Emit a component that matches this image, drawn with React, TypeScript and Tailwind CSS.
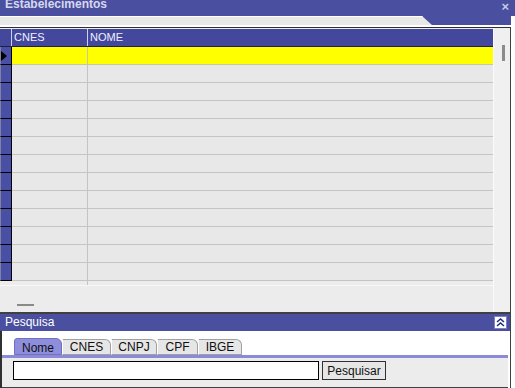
import React from 'react'

const ROWS = Array.from({ length: 13 }, (_, i) => i)
const TABS = [
  { label: 'Nome', w: 'w-[48px]' },
  { label: 'CNES', w: 'w-[49px]' },
  { label: 'CNPJ', w: 'w-[46px]' },
  { label: 'CPF', w: 'w-[41px]' },
  { label: 'IBGE', w: 'w-[44px]' },
]

function Row({ index }: { index: number }) {
  const active = index === 0
  return (
    <div className="flex h-[18px]">
      {/* row indicator */}
      <div className="w-[12px] border-l border-[#8080a0] border-r border-b border-r-black border-b-black bg-[#4a4fa6] flex items-center">
        {active && (
          <svg width="6" height="10" viewBox="0 0 6 10">
            <path d="M0 0 L6 5 L0 10 Z" fill="#000" />
          </svg>
        )}
      </div>
      <div
        className={
          active
            ? 'w-[76px] bg-[#ffff00] border-r border-b border-[#c8c8a0]'
            : 'w-[76px] bg-[#e8e8e8] border-r border-b border-[#c4c4c4]'
        }
      />
      <div
        className={
          active
            ? 'flex-1 bg-[#ffff00] border-b border-[#c8c8a0]'
            : 'flex-1 bg-[#e8e8e8] border-b border-[#c4c4c4]'
        }
      />
    </div>
  )
}

export default function App() {
  return (
    <div className="w-[515px] h-[388px] bg-white overflow-hidden flex flex-col font-['Liberation_Sans',Arial,sans-serif] text-[11px]">
      {/* Title bar */}
      <div className="h-[16px] bg-[#4a4f9f] flex items-start justify-between pl-[5px] pr-[6px] overflow-hidden">
        <span className="-mt-[4px] text-[12px] font-bold text-[#d6d8ee] leading-[16px]">Estabelecimentos</span>
        <span className="mt-[1px] text-[13px] font-bold text-[#c8cbe6] leading-[12px]">×</span>
      </div>

      {/* tab strip */}
      <div className="w-[511px] h-[12px] bg-[#4a4f9f] flex flex-col">
        <div className="h-[9px] w-[432px] bg-[#e8e8e8] border-t border-white [clip-path:polygon(0_0,422px_0,432px_100%,0_100%)]" />
        <div className="h-[2px] bg-white" />
        <div className="h-[1px] bg-[#303030]" />
      </div>

      {/* Grid + scrollbar */}
      <div className="w-[511px] h-[284px] flex border-r border-[#404040]">
        <div className="w-[493px] flex flex-col bg-[#ececec]">
          {/* header */}
          <div className="flex h-[18px] bg-[#43489c] border-b border-[#202040] text-[#f0f0ff] mt-[1px]">
            <div className="w-[12px] border-r border-[#d0d0e8]" />
            <div className="w-[76px] border-r border-[#d0d0e8] pl-[2px] leading-[17px]">CNES</div>
            <div className="flex-1 pl-[2px] leading-[17px]">NOME</div>
          </div>
          {ROWS.map((i) => (
            <Row key={i} index={i} />
          ))}
          <div className="flex h-[4px]">
            <div className="w-[88px] border-r border-[#c4c4c4]" />
          </div>
          <div className="flex-1 border-t border-[#f8f8f8] pl-[17px] pt-[18px]">
            <div className="w-[17px] h-[2px] bg-[#8a8a8a]" />
          </div>
        </div>
        <div className="flex-1 bg-[#f0f0f0] border-l border-[#fafafa] pt-[17px] pl-[8px]">
          <div className="w-[3px] h-[16px] bg-[#8c8c8c]" />
        </div>
      </div>

      {/* Pesquisa panel */}
      <div className="w-[511px] flex-1 flex flex-col border-t-2 border-[#101010] border-r border-[#404040]">
        <div className="h-[17px] bg-[#4a4f9f] flex items-center justify-between pl-[5px] pr-[3px]">
          <span className="text-[12px] text-white leading-[17px]">Pesquisa</span>
          <div className="w-[13px] h-[13px] bg-white border border-[#8080c0] flex items-center justify-center">
            <svg width="9" height="9" viewBox="0 0 9 9">
              <path d="M1 4 L4.5 1 L8 4 M1 8 L4.5 5 L8 8" stroke="#1c2a7c" strokeWidth="1.5" fill="none" />
            </svg>
          </div>
        </div>
        <div className="flex-1 flex flex-col border-l-2 border-[#303030] pt-[7px]">
          <div className="flex pl-[12px] h-[17px] items-end">
            {TABS.map((t, i) => (
              <div
                key={t.label}
                className={
                  i === 0
                    ? `${t.w} h-[17px] bg-[#8e8edc] border border-[#7070c0] rounded-tl-[3px] rounded-tr-[6px] text-center leading-[18px] text-[12px] text-[#101010]`
                    : `${t.w} h-[16px] bg-[#e6e6e6] border border-[#a0a0a0] border-l-white rounded-tr-[6px] text-center leading-[14px] text-[12px] text-[#101010]`
                }
              >
                {t.label}
              </div>
            ))}
          </div>
          <div className="h-[3px] bg-[#8a8ad8] mr-[2px]" />
          <div className="flex-1 bg-[#ececec] border-b border-[#404040] flex items-start pl-[11px] pt-[3px] gap-[3px] mr-[2px]">
            <div className="w-[306px] h-[19px] bg-white border border-black" />
            <button className="w-[64px] h-[19px] bg-[#e6e6e6] border border-[#303030] text-[12px] leading-[16px] text-[#101010]">
              Pesquisar
            </button>
          </div>
        </div>
      </div>
    </div>
  )
}
